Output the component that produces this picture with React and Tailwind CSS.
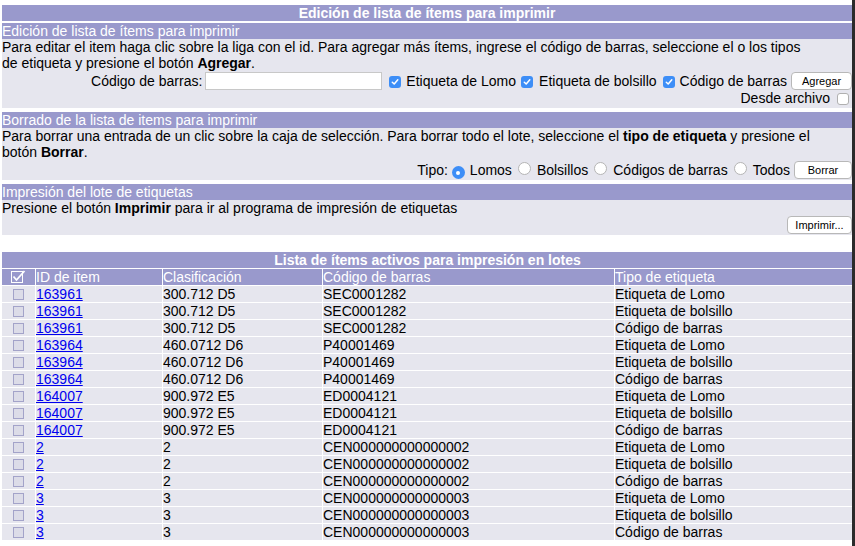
const rows = [
  ['163961', '300.712 D5', 'SEC0001282', 'Etiqueta de Lomo'],
  ['163961', '300.712 D5', 'SEC0001282', 'Etiqueta de bolsillo'],
  ['163961', '300.712 D5', 'SEC0001282', 'Código de barras'],
  ['163964', '460.0712 D6', 'P40001469', 'Etiqueta de Lomo'],
  ['163964', '460.0712 D6', 'P40001469', 'Etiqueta de bolsillo'],
  ['163964', '460.0712 D6', 'P40001469', 'Código de barras'],
  ['164007', '900.972 E5', 'ED0004121', 'Etiqueta de Lomo'],
  ['164007', '900.972 E5', 'ED0004121', 'Etiqueta de bolsillo'],
  ['164007', '900.972 E5', 'ED0004121', 'Código de barras'],
  ['2', '2', 'CEN000000000000002', 'Etiqueta de Lomo'],
  ['2', '2', 'CEN000000000000002', 'Etiqueta de bolsillo'],
  ['2', '2', 'CEN000000000000002', 'Código de barras'],
  ['3', '3', 'CEN000000000000003', 'Etiqueta de Lomo'],
  ['3', '3', 'CEN000000000000003', 'Etiqueta de bolsillo'],
  ['3', '3', 'CEN000000000000003', 'Código de barras'],
];

const BlueCheck = () => (
  <span className="inline-flex w-[12px] h-[12px] rounded-[3px] bg-[#3d8ef7] items-center justify-center shrink-0">
    <svg width="8" height="8" viewBox="0 0 8 8">
      <path d="M1.3 4.2 L3.2 6 L6.8 1.8" fill="none" stroke="white" strokeWidth="1.5" strokeLinecap="round" strokeLinejoin="round" />
    </svg>
  </span>
);

const Radio = ({ checked }) =>
  checked ? (
    <span className="inline-flex w-[13px] h-[13px] rounded-full bg-[#3d8ef7] items-center justify-center shrink-0">
      <span className="w-[4px] h-[4px] rounded-full bg-white" />
    </span>
  ) : (
    <span className="inline-block w-[13px] h-[13px] rounded-full bg-white border border-[#b5b5b5] shrink-0" />
  );

const MacButton = ({ children, w }) => (
  <button className={`${w} h-[18px] bg-white border border-[#b8b8b8] rounded-[4px] text-[11px] leading-none text-black flex items-center justify-center shrink-0`}>
    {children}
  </button>
);

const SectionHead = ({ children }) => (
  <div className="h-[16px] leading-[16px] bg-[#9999cc] text-white">{children}</div>
);

export default function App() {
  return (
    <div className="flex min-h-screen bg-white font-['Liberation_Sans',Arial,sans-serif] text-[14px] text-black">
      <div className="w-[852px] pl-[2px] pt-[5px]">
        <div className="h-[16px] leading-[16px] bg-[#9999cc] text-white font-bold text-center">
          Edición de lista de ítems para imprimir
        </div>

        <div className="mt-[2px]">
          <SectionHead>Edición de lista de ítems para imprimir</SectionHead>
          <div className="bg-[#e6e6ee] pb-[1px]">
            <p className="leading-[16px] pr-[38px]">
              Para editar el item haga clic sobre la liga con el id. Para agregar más ítems, ingrese el código de barras, seleccione el o los tipos de etiqueta y presione el botón <b>Agregar</b>.
            </p>
            <div className="mt-[1px] h-[18px] flex items-center justify-end">
              <span>Código de barras:</span>
              <input className="ml-[3px] w-[177px] h-[18px] bg-white border border-[#c8c8c8] outline-none" />
              <span className="ml-[7px]"><BlueCheck /></span>
              <span className="ml-[5px]">Etiqueta de Lomo</span>
              <span className="ml-[5px]"><BlueCheck /></span>
              <span className="ml-[6px]">Etiqueta de bolsillo</span>
              <span className="ml-[6px]"><BlueCheck /></span>
              <span className="ml-[5px]">Código de barras</span>
              <span className="ml-[4px]"><MacButton w="w-[61px]">Agregar</MacButton></span>
            </div>
            <div className="h-[17px] flex items-center justify-end pr-[3px]">
              <span>Desde archivo</span>
              <span className="ml-[7px] inline-block w-[12px] h-[12px] rounded-[3px] bg-white border border-[#b0b0b0]" />
            </div>
          </div>
        </div>

        <div className="mt-[4px]">
          <SectionHead>Borrado de la lista de items para imprimir</SectionHead>
          <div className="bg-[#e6e6ee] pb-[1px]">
            <p className="leading-[16px] pr-[38px]">
              Para borrar una entrada de un clic sobre la caja de selección. Para borrar todo el lote, seleccione el <b>tipo de etiqueta</b> y presione el botón <b>Borrar</b>.
            </p>
            <div className="mt-[1px] h-[18px] flex items-center justify-end">
              <span>Tipo:</span>
              <span className="ml-[4px]"><Radio checked /></span>
              <span className="ml-[5px]">Lomos</span>
              <span className="ml-[6px]"><Radio /></span>
              <span className="ml-[6px]">Bolsillos</span>
              <span className="ml-[6px]"><Radio /></span>
              <span className="ml-[6px]">Códigos de barras</span>
              <span className="ml-[6px]"><Radio /></span>
              <span className="ml-[6px]">Todos</span>
              <span className="ml-[4px]"><MacButton w="w-[58px]">Borrar</MacButton></span>
            </div>
          </div>
        </div>

        <div className="mt-[4px]">
          <SectionHead>Impresión del lote de etiquetas</SectionHead>
          <div className="bg-[#e6e6ee] pb-[1px]">
            <p className="leading-[16px]">
              Presione el botón <b>Imprimir</b> para ir al programa de impresión de etiquetas
            </p>
            <div className="h-[18px] flex items-center justify-end">
              <MacButton w="w-[65px]">Imprimir...</MacButton>
            </div>
          </div>
        </div>

        <table className="mt-[16px] -ml-[1px] w-[853px] border-separate border-spacing-px table-fixed">
          <colgroup>
            <col className="w-[33px]" />
            <col className="w-[126px]" />
            <col className="w-[159px]" />
            <col className="w-[291px]" />
            <col />
          </colgroup>
          <thead>
            <tr>
              <th colSpan={5} className="h-[16px] leading-[16px] p-0 bg-[#9999cc] text-white font-bold text-center">
                Lista de ítems activos para impresión en lotes
              </th>
            </tr>
            <tr className="text-white font-normal">
              <th className="h-[16px] p-0 bg-[#9999cc]">
                <div className="flex justify-center">
                  <svg width="15" height="14" viewBox="0 0 15 14">
                    <rect x="0.5" y="1.5" width="11" height="11" fill="none" stroke="white" strokeWidth="1" />
                    <path d="M2.5 6.5 L5.5 10 L13.5 1" fill="none" stroke="white" strokeWidth="1.8" />
                  </svg>
                </div>
              </th>
              <th className="h-[16px] leading-[16px] p-0 bg-[#9999cc] font-normal text-left">ID de item</th>
              <th className="h-[16px] leading-[16px] p-0 bg-[#9999cc] font-normal text-left">Clasificación</th>
              <th className="h-[16px] leading-[16px] p-0 bg-[#9999cc] font-normal text-left">Código de barras</th>
              <th className="h-[16px] leading-[16px] p-0 bg-[#9999cc] font-normal text-left">Tipo de etiqueta</th>
            </tr>
          </thead>
          <tbody>
            {rows.map((r, i) => (
              <tr key={i}>
                <td className="h-[16px] p-0 bg-[#e6e6ee]">
                  <div className="flex justify-center">
                    <span className="inline-block w-[11px] h-[11px] border border-[#a3a3c9] bg-[#dcdce8]" />
                  </div>
                </td>
                <td className="h-[16px] leading-[16px] p-0 bg-[#e6e6ee]">
                  <a href="#" className="text-[#0000ee] underline">{r[0]}</a>
                </td>
                <td className="h-[16px] leading-[16px] p-0 bg-[#e6e6ee]">{r[1]}</td>
                <td className="h-[16px] leading-[16px] p-0 bg-[#e6e6ee]">{r[2]}</td>
                <td className="h-[16px] leading-[16px] p-0 bg-[#e6e6ee]">{r[3]}</td>
              </tr>
            ))}
          </tbody>
        </table>
      </div>
      <div className="w-[3px] bg-[#2b2b2b]" />
    </div>
  );
}
